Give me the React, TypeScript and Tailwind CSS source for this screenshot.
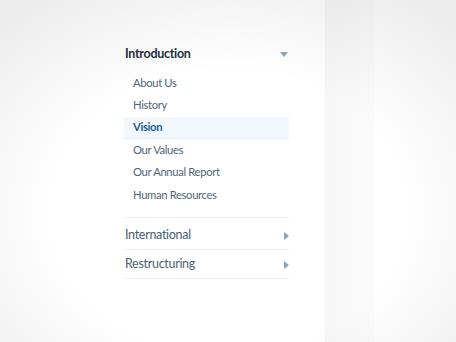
import React from "react";

const subItems = ["About Us", "History", "Vision", "Our Values", "Our Annual Report", "Human Resources"];

function CaretDown() {
  return (
    <svg width="8" height="5" viewBox="0 0 8 5" className="shrink-0">
      <path d="M0 0 H8 L4 5 Z" fill="#8ea3b8" />
    </svg>
  );
}

function CaretRight() {
  return (
    <svg width="5" height="8" viewBox="0 0 5 8" className="shrink-0">
      <path d="M0 0 L5 4 L0 8 Z" fill="#8ea3b8" />
    </svg>
  );
}

export default function App() {
  return (
    <div
      className="w-[456px] h-[342px] overflow-hidden bg-[linear-gradient(to_right,transparent_325px,rgba(0,0,0,0.035)_325px,rgba(0,0,0,0.012)_375px,transparent_375px),radial-gradient(ellipse_70%_75%_at_50%_62%,#ffffff_55%,#ededed_100%)]"
      style={{ fontFamily: "Lato, Roboto, sans-serif" }}
    >
      <div className="pl-[124px] pt-[44px] w-[290px]">
        <div className="w-[165px]">
          <div className="flex items-center justify-between h-[20px] pl-[1px] pr-[1px]">
            <span className="text-[12.5px] font-bold text-[#1e2e3e] tracking-[-0.3px]">Introduction</span>
            <CaretDown />
          </div>
          <ul className="mt-[8px]">
            {subItems.map((item) => {
              const active = item === "Vision";
              return (
                <li
                  key={item}
                  className={`h-[22.4px] flex items-center pl-[9px] text-[11.25px] tracking-[-0.35px] ${
                    active
                      ? "bg-[#f1f7fd] border-b border-[#e4eef7] font-bold text-[#1c5d9c]"
                      : "text-[#526579]"
                  }`}
                >
                  {item}
                </li>
              );
            })}
          </ul>
          <div className="mt-[11px] border-t border-[#e9edf1]">
            {["International", "Restructuring"].map((item, i) => (
              <div
                key={item}
                className={`flex items-center justify-between pl-[1px] border-b border-[#e9edf1] text-[12.5px] tracking-[-0.3px] text-[#4a5f73] ${
                  i === 0 ? "h-[32px] pt-[4px]" : "h-[29px] pt-[1px]"
                }`}
              >
                <span>{item}</span>
                <CaretRight />
              </div>
            ))}
          </div>
        </div>
      </div>
    </div>
  );
}
